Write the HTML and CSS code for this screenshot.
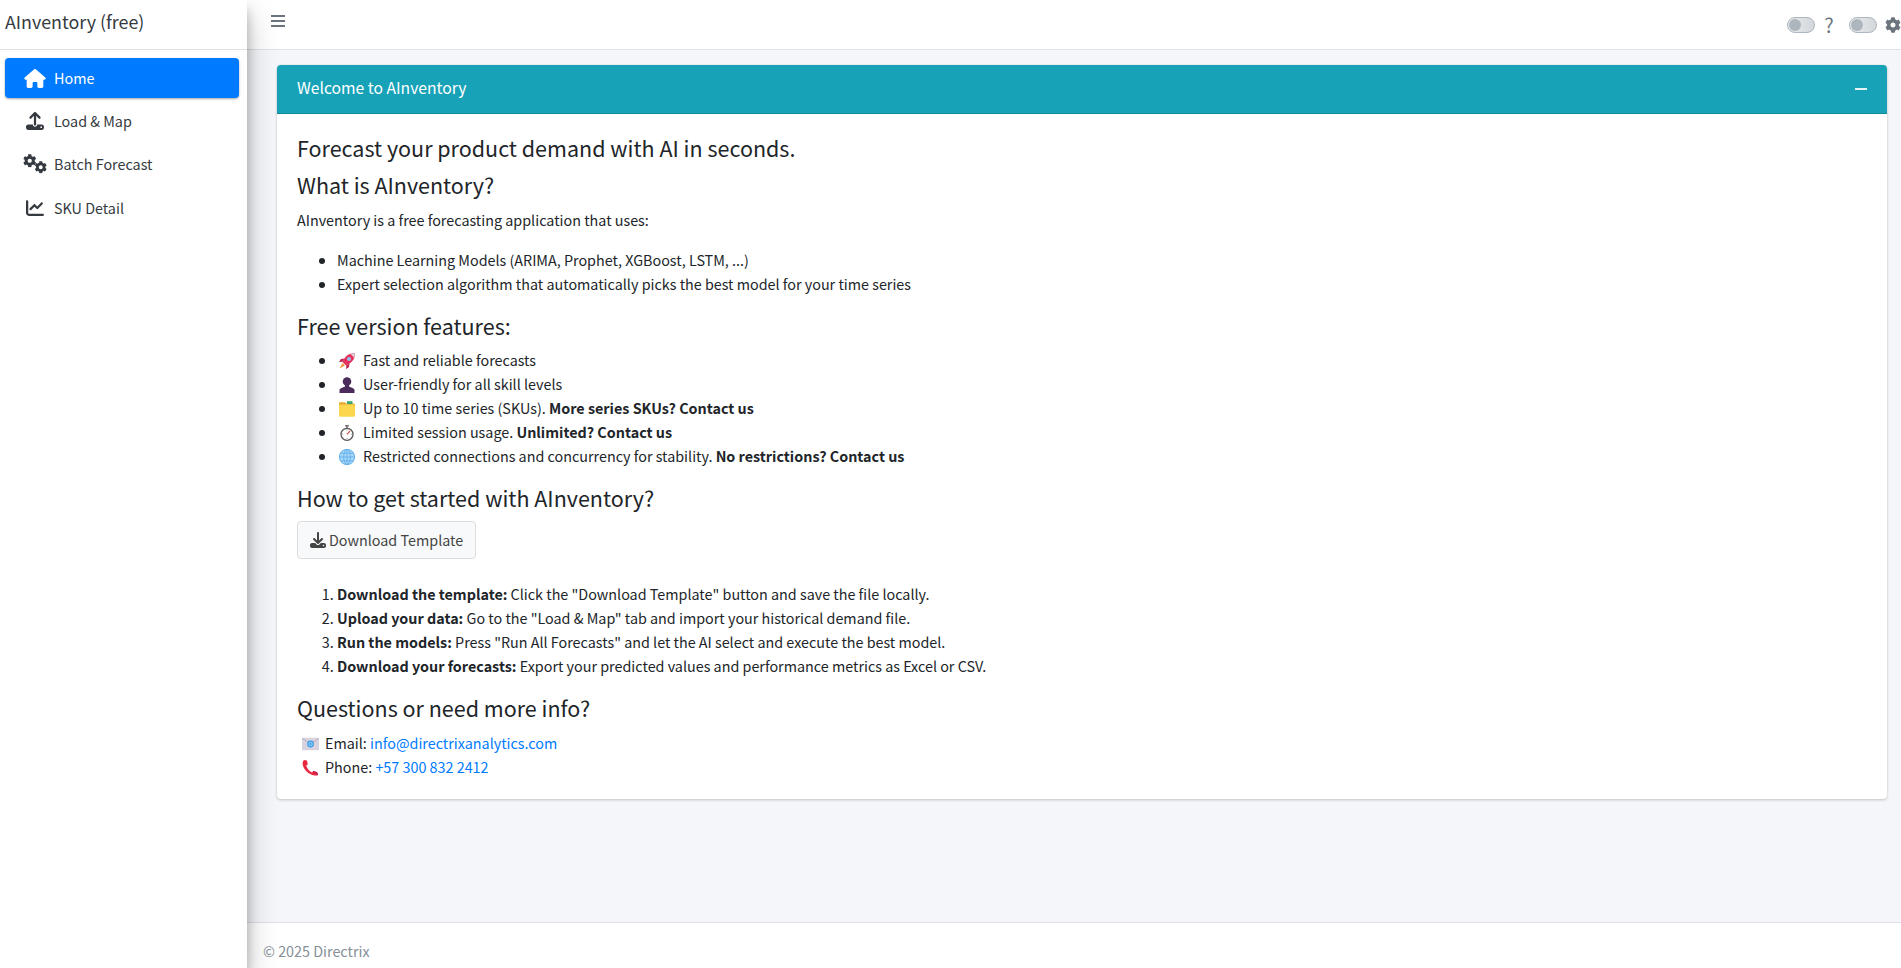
FILE: index.html
```html
<!DOCTYPE html>
<html lang="en">
<head>
<meta charset="utf-8">
<title>AInventory (free)</title>
<link rel="stylesheet" href="styles.css">
</head>
<body>
<svg class="defs" width="0" height="0" aria-hidden="true">
  <symbol id="i-cog" viewBox="0 0 512 512"><path d="M487.4 315.7l-42.6-24.6c4.3-23.2 4.3-47 0-70.2l42.6-24.6c4.9-2.8 7.1-8.6 5.5-14-11.1-35.6-30-67.8-54.7-94.6-3.8-4.1-10-5.1-14.8-2.3L380.8 110c-17.9-15.4-38.5-27.3-60.8-35.1V25.8c0-5.6-3.9-10.5-9.4-11.7-36.7-8.2-74.3-7.8-109.2 0-5.5 1.2-9.4 6.1-9.4 11.7V75c-22.2 7.9-42.8 19.8-60.8 35.1L88.7 85.5c-4.9-2.8-11-1.9-14.8 2.3-24.7 26.7-43.6 58.9-54.7 94.6-1.7 5.4.6 11.2 5.5 14L67.3 221c-4.3 23.2-4.3 47 0 70.2l-42.6 24.6c-4.9 2.8-7.1 8.6-5.5 14 11.1 35.6 30 67.8 54.7 94.6 3.8 4.1 10 5.1 14.8 2.3l42.6-24.6c17.9 15.4 38.5 27.3 60.8 35.1v49.2c0 5.6 3.9 10.5 9.4 11.7 36.7 8.2 74.3 7.8 109.2 0 5.5-1.2 9.4-6.1 9.4-11.7v-49.2c22.2-7.9 42.8-19.8 60.8-35.1l42.6 24.6c4.9 2.8 11 1.9 14.8-2.3 24.7-26.7 43.6-58.9 54.7-94.6 1.5-5.5-.7-11.3-5.6-14.1zM256 336c-44.1 0-80-35.9-80-80s35.9-80 80-80 80 35.9 80 80-35.9 80-80 80z"/></symbol>
</svg>
<aside class="sidebar">
  <div class="brand">AInventory (free)</div>
  <nav class="nav">
    <a class="nav-link active">
      <svg class="nav-icon home" viewBox="0 0 576 512"><path d="M575.8 255.5c0 18-15 32.1-32 32.1h-32l.7 160.2c0 2.7-.2 5.4-.5 8.1V472c0 22.1-17.9 40-40 40H456c-1.1 0-2.2 0-3.3-.1c-1.4 .1-2.8 .1-4.2 .1H416 392c-22.1 0-40-17.9-40-40V448 384c0-17.7-14.3-32-32-32H256c-17.7 0-32 14.3-32 32v64 24c0 22.1-17.9 40-40 40H160 128.1c-1.5 0-3-.1-4.5-.2c-1.2 .1-2.4 .2-3.6 .2H104c-22.1 0-40-17.9-40-40V360c0-.9 0-1.9 .1-2.8V287.6H32c-18 0-32-14-32-32.1c0-9 3-17 10-24L266.4 8c7-7 15-8 22-8s15 2 21 7L564.8 231.5c8 7 12 15 11 24z"/></svg>
      <span>Home</span>
    </a>
    <a class="nav-link">
      <svg class="nav-icon" viewBox="0 0 512 512"><path d="M288 109.3V352c0 17.7-14.3 32-32 32s-32-14.3-32-32V109.3l-73.4 73.4c-12.5 12.5-32.8 12.5-45.3 0s-12.5-32.8 0-45.3l128-128c12.5-12.5 32.8-12.5 45.3 0l128 128c12.5 12.5 12.5 32.8 0 45.3s-32.8 12.5-45.3 0L288 109.3zM64 352H192c0 35.3 28.7 64 64 64s64-28.7 64-64H448c35.3 0 64 28.7 64 64v32c0 35.3-28.7 64-64 64H64c-35.3 0-64-28.7-64-64V416c0-35.3 28.7-64 64-64zM432 456a24 24 0 1 0 0-48 24 24 0 1 0 0 48z"/></svg>
      <span>Load &amp; Map</span>
    </a>
    <a class="nav-link">
      <svg class="nav-icon gears" viewBox="0 0 24 20"><use href="#i-cog" x="0" y="0" width="13.500" height="13.500"/><use href="#i-cog" x="11.500" y="7" width="12.500" height="12.500"/></svg>
      <span>Batch Forecast</span>
    </a>
    <a class="nav-link">
      <svg class="nav-icon" viewBox="0 0 512 512"><path d="M64 64c0-17.7-14.3-32-32-32S0 46.3 0 64V400c0 44.2 35.8 80 80 80H480c17.7 0 32-14.3 32-32s-14.3-32-32-32H80c-8.8 0-16-7.2-16-16V64zm406.6 86.6c12.5-12.5 12.5-32.8 0-45.3s-32.8-12.5-45.3 0L320 210.7l-57.4-57.4c-12.5-12.5-32.8-12.5-45.3 0l-112 112c-12.5 12.5-12.5 32.8 0 45.3s32.8 12.5 45.3 0L240 221.3l57.4 57.4c12.5 12.5 32.8 12.5 45.3 0l128-128z"/></svg>
      <span>SKU Detail</span>
    </a>
  </nav>
</aside>
<div class="main">
  <header class="topbar">
    <span class="burger"><i></i><i></i><i></i></span>
    <div class="top-tools">
      <span class="switch"><i></i></span>
      <span class="help">?</span>
      <span class="switch"><i></i></span>
      <svg class="top-gear"><use href="#i-cog"/></svg>
    </div>
  </header>
  <main class="content">
    <section class="card">
      <div class="card-head">
        <h3>Welcome to AInventory</h3>
        <span class="minus"></span>
      </div>
      <div class="card-body">
        <h4>Forecast your product demand with AI in seconds.</h4>
        <h4>What is AInventory?</h4>
        <p>AInventory is a free forecasting application that uses:</p>
        <ul>
          <li>Machine Learning Models (ARIMA, Prophet, XGBoost, LSTM, ...)</li>
          <li>Expert selection algorithm that automatically picks the best model for your time series</li>
        </ul>
        <h4>Free version features:</h4>
        <ul>
          <li><svg class="emoji" viewBox="0 0 16 16"><path fill="#e8315a" d="M16 0c-5 .1-8.500 2-10.800 5.700L3.500 9l3.500 3.500 3.300-1.700C14 8.500 15.900 5 16 0z"/><path fill="#d9d3e0" d="M16 0l-4.500 1 3.500 3.500z"/><circle cx="10" cy="6" r="2" fill="#8ac4ee"/><path fill="#c42a52" d="M5.500 5.500L1.800 6 0 9l3.800-.3zM10.500 10.500L10 14.200 7 16l.3-3.800z"/><path fill="#f59a3c" d="M3.500 10L.5 15.500 6 12.500z"/></svg>Fast and reliable forecasts</li>
          <li><svg class="emoji" viewBox="0 0 16 16"><circle cx="8" cy="4.500" r="4.300" fill="#4b2a5c"/><path fill="#4b2a5c" d="M6 8h4v1.500l4 1.700c1 .5 1.500 1.100 1.500 2.100V16H.5V13.300c0-1 .5-1.600 1.500-2.100l4-1.700z"/></svg>User-friendly for all skill levels</li>
          <li><svg class="emoji" viewBox="0 0 16 16"><path fill="#e9a92c" d="M0 2.500C0 1.700.5 1.200 1.300 1.200h4.500l1.500 1.300h7.400c.8 0 1.300.5 1.300 1.300v2H0z"/><rect x="8" y=".2" width="5.500" height="3" fill="#3fa66b"/><rect y="3.400" width="16" height="12.400" rx="1.300" fill="#fbd64e"/></svg>Up to 10 time series (SKUs). <b>More series SKUs? Contact us</b></li>
          <li><svg class="emoji" viewBox="0 0 16 16"><rect x="6.300" width="3.400" height="1.600" fill="#6b6468"/><rect x="7.300" y="1.400" width="1.400" height="2" fill="#6b6468"/><circle cx="8" cy="9.300" r="6" fill="#fff" stroke="#5d5659" stroke-width="1.300"/><path d="M8 9.300L11 6" stroke="#d9534f" stroke-width="1.200"/><path d="M8 4.500v1M3.200 9.300h1M11.800 9.300h1M8 13v1" stroke="#8a8386" stroke-width=".8"/></svg>Limited session usage. <b>Unlimited? Contact us</b></li>
          <li><svg class="emoji" viewBox="0 0 16 16"><circle cx="8" cy="8" r="8" fill="#a8d8fa"/><g fill="none" stroke="#5aa9ea" stroke-width=".8"><circle cx="8" cy="8" r="7.600"/><ellipse cx="8" cy="8" rx="3.300" ry="7.600"/><path d="M8 .4v15.200M.4 8h15.200M1.600 4.200h12.800M1.600 11.800h12.800"/></g></svg>Restricted connections and concurrency for stability. <b>No restrictions? Contact us</b></li>
        </ul>
        <h4>How to get started with AInventory?</h4>
        <a class="btn"><svg class="btn-icon" viewBox="0 0 512 512"><path d="M288 32c0-17.700-14.300-32-32-32s-32 14.300-32 32V274.700l-73.400-73.400c-12.500-12.500-32.800-12.500-45.300 0s-12.500 32.800 0 45.300l128 128c12.500 12.500 32.800 12.500 45.300 0l128-128c12.500-12.500 12.500-32.800 0-45.300s-32.800-12.500-45.300 0L288 274.700V32zM64 352c-35.300 0-64 28.700-64 64v32c0 35.300 28.700 64 64 64H448c35.300 0 64-28.700 64-64V416c0-35.300-28.700-64-64-64H346.500l-45.300 45.300c-25 25-65.500 25-90.500 0L165.500 352H64zm368 56a24 24 0 1 1 0 48 24 24 0 1 1 0-48z"/></svg>Download Template</a>
        <ol>
          <li><b>Download the template:</b> Click the "Download Template" button and save the file locally.</li>
          <li><b>Upload your data:</b> Go to the "Load &amp; Map" tab and import your historical demand file.</li>
          <li><b>Run the models:</b> Press "Run All Forecasts" and let the AI select and execute the best model.</li>
          <li><b>Download your forecasts:</b> Export your predicted values and performance metrics as Excel or CSV.</li>
        </ol>
        <h4>Questions or need more info?</h4>
        <div class="contact"><svg class="emoji" viewBox="0 0 18 14"><rect y=".5" width="18" height="13" rx=".8" fill="#d8d2de"/><path d="M.2 1L9 7l8.800-6" fill="none" stroke="#a79fb0" stroke-width=".7"/><circle cx="9" cy="7" r="3.600" fill="#3e9ee6"/><circle cx="9" cy="7" r="1.800" fill="none" stroke="#bfe3fb" stroke-width=".8"/></svg>Email: <a href="#">info@directrixanalytics.com</a></div>
        <div class="contact"><svg class="emoji" viewBox="0 0 16 16"><path fill="#e8283f" d="M1.500 0L4.500.6 5.300 4.500 3.700 5.500c.7 2.700 3 5.500 5.800 7l1.500-1.500 3.700 1.200.8 2.700c-.8.500-2 .7-3.500.5C6 14.700 1.200 9.500.2 4.500-.1 2.800.4 1 1.500 0z"/><path fill="#c2185b" d="M11 11l3.700 1.200.8 2.700-1.200.4-1-2.600-3.300-1z"/></svg>Phone: <a href="#">+57 300 832 2412</a></div>
      </div>
    </section>
  </main>
  <footer class="footer">© 2025 Directrix</footer>
</div>
</body>
</html>
```
FILE: styles.css
```css
* { box-sizing: border-box; }
html { overflow: hidden; }
body {
  margin: 0;
  display: flex;
  height: 968px;
  overflow: hidden;
  background: #f4f6f9;
  color: #212529;
  font-family: "Noto Sans CJK SC", "Source Sans Pro", sans-serif;
  font-size: 14.350px;
  line-height: 24px;
}
.defs { position: absolute; }
.sidebar {
  width: 247px;
  flex: none;
  background: #fff;
  position: relative;
  z-index: 2;
  box-shadow: 0 14px 28px rgba(0,0,0,.25), 0 10px 10px rgba(0,0,0,.22);
}
.brand {
  height: 50px;
  padding: 0 5px;
  font-size: 17.850px;
  line-height: 43px;
  color: #343a40;
  border-bottom: 1px solid #dee2e6;
}
.nav { padding: 8px 8px 0 5px; display: flex; flex-direction: column; gap: 3.200px; }
.nav-link {
  display: flex;
  align-items: center;
  height: 40px;
  padding-left: 18px;
  color: #343a40;
  border-radius: 4px;
}
.nav-link.active {
  background: #007bff;
  color: #fff;
  box-shadow: 0 1px 3px rgba(0,0,0,.12), 0 1px 2px rgba(0,0,0,.24);
}
.nav-icon { width: 24px; height: 18px; margin-right: 7px; fill: currentColor; flex: none; }
.nav-icon.home { height: 19px; }
.nav-icon.gears { height: 20px; }
.main { flex: 1; min-width: 0; display: flex; flex-direction: column; }
.topbar {
  height: 50px;
  flex: none;
  background: #fff;
  border-bottom: 1px solid #dee2e6;
  display: flex;
  justify-content: space-between;
  padding: 15px 0 0 24px;
}
.burger { display: flex; flex-direction: column; gap: 3px; width: 14px; }
.burger i { display: block; height: 2px; background: #6c757d; }
.top-tools { display: flex; align-items: flex-start; height: 20px; }
.switch {
  width: 28px;
  height: 16px;
  margin-top: 2px;
  border: 1px solid #adb5bd;
  border-radius: 8px;
  background: linear-gradient(90deg, #e9ecef, #d3d7db);
  padding: 1px;
}
.switch i { display: block; width: 12px; height: 12px; border-radius: 50%; background: #adb5bd; }
.help { width: 34px; padding-right: 6px; text-align: center; font-size: 20px; line-height: 20px; color: #6c757d; }
.top-gear { width: 16px; height: 16px; margin: 2px 0 0 8px; fill: #6c757d; }
.content { flex: 1; padding: 15px 14px 0 30px; min-height: 0; }
.card {
  background: #fff;
  border-radius: 4px;
  box-shadow: 0 0 1px rgba(0,0,0,.125), 0 1px 3px rgba(0,0,0,.2);
  overflow: hidden;
}
.card-head {
  height: 49px;
  background: #17a2b8;
  border-bottom: 1px solid #138a9c;
  color: #fff;
  display: flex;
  align-items: center;
  justify-content: space-between;
  padding: 0 20px 3px;
}
.card-head h3 { margin: 0; font-size: 15.700px; font-weight: 400; line-height: 22px; }
.minus { width: 12px; height: 2px; margin-top: 3px; background: #e4f4f7; }
.card-body { padding: 20px; }
h4 { margin: 0 0 8px; padding-bottom: 1.800px; font-size: 21.500px; font-weight: 400; line-height: 27px; }
p { margin: 0 0 16px; }
ul, ol { margin: 0 0 16px; padding-left: 40px; }
b { font-weight: 700; }
a { color: #007bff; text-decoration: none; }
.emoji { width: 16px; height: 16px; margin: 0 8px 0 2px; vertical-align: -3px; }
.btn {
  display: inline-flex;
  align-items: center;
  height: 38px;
  padding: 0 12px;
  background: #f8f9fa;
  border: 1px solid #ddd;
  border-radius: 4px;
  color: #444;
  margin-bottom: 23px;
}
.btn-icon { width: 16px; height: 16px; margin-right: 3px; fill: #444; }
.contact { padding-left: 5px; }
.contact .emoji { width: 17px; margin: 0 6px 0 0; }
.footer {
  height: 46px;
  flex: none;
  background: #fff;
  border-top: 1px solid #dee2e6;
  color: #869099;
  padding: 16px 16px 0;
}
```
